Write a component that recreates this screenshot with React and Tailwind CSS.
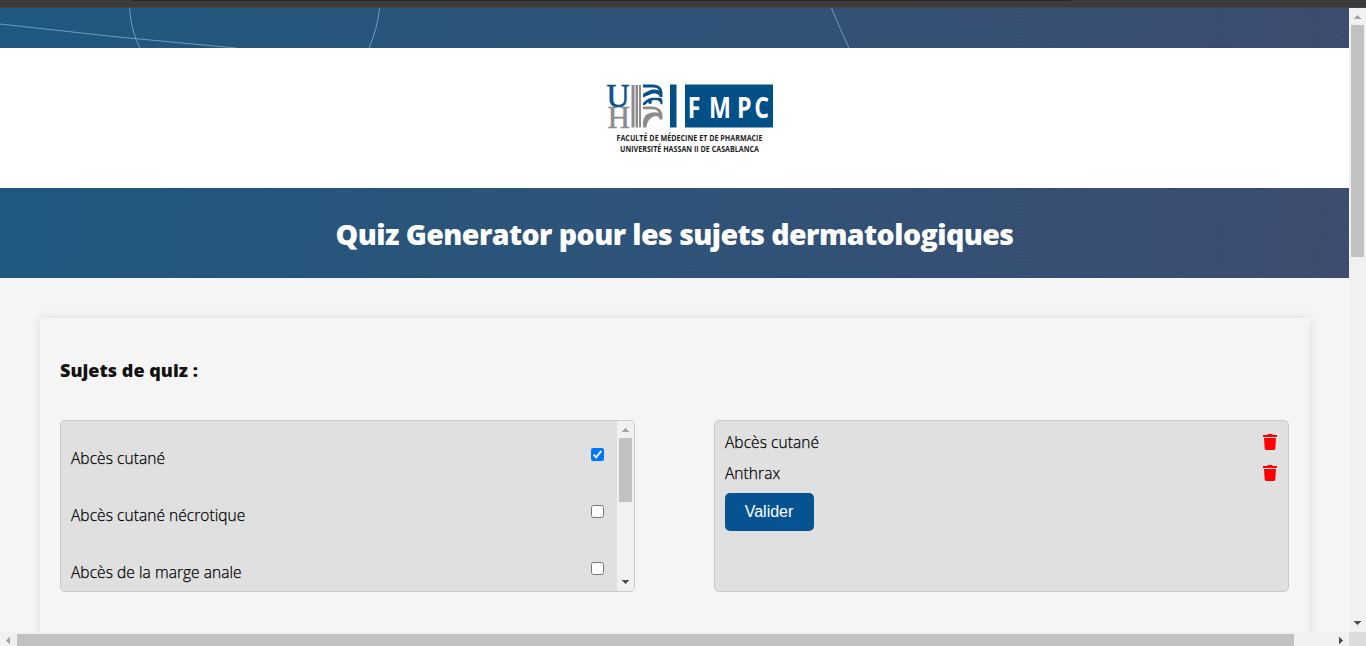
import React from "react";

const topics = [
  { name: "Abcès cutané", checked: true },
  { name: "Abcès cutané nécrotique", checked: false },
  { name: "Abcès de la marge anale", checked: false },
];
const selected = ["Abcès cutané", "Anthrax"];

function Arrow({ d, className }) {
  return (
    <svg className={className} width="7" height="7" viewBox="0 0 7 7" shapeRendering="crispEdges">
      <path d={d} fill="currentColor" />
    </svg>
  );
}
const UP = "M3 2h1v1h1v1h1v1h1v1H0V5h1V4h1V3h1z";
const DOWN = "M0 1h7v1H6v1H5v1H4v1H3V4H2V3H1V2H0z";
const LEFT = "M1 3h1V2h1V1h1V0h1v7H4V6H3V5H2V4H1z";
const RIGHT = "M2 0h1v1h1v1h1v1h1v1H5v1H4v1H3v1H2z";

function Trash() {
  return (
    <svg className="block text-[#ff0000]" width="14" height="16" viewBox="0 0 14 16">
      <path fill="currentColor" d="M0 1h4.2L4.6 .3Q4.8 0 5.2 0h3.6q.4 0 .6.3L9.800 1H14v2H0zM1 4h12l-.7 10.600Q12.200 16 10.800 16H3.200Q1.800 16 1.700 14.600z" />
    </svg>
  );
}

function Check({ on }) {
  return on ? (
    <svg className="block" width="13" height="13" viewBox="0 0 13 13">
      <rect width="13" height="13" rx="2" fill="#0075ff" />
      <path d="M2.700 6.800l2.500 2.500 5-6.300" fill="none" stroke="#fff" strokeWidth="2" />
    </svg>
  ) : (
    <span className="block h-[13px] w-[13px] rounded-[2.5px] border border-[#767676] bg-white" />
  );
}

function Band({ className, children }) {
  return (
    <div className={"relative overflow-hidden bg-linear-[97deg] from-[#20587f] via-[#2f5378] to-[#3d4c6f] " + className}>
      {children}
    </div>
  );
}

function Waves({ h }) {
  return (
    <svg className="absolute inset-0" width="1349" height={h} viewBox={"0 0 1349 " + h} fill="none" stroke="#1c3f68" strokeOpacity=".12">
      {[-60, -48, -36, -24, -12, 0, 12, 24, 36, 48, 60, 72, 84].map((y) => (
        <path key={y} d={`M0 ${y}C150 ${y - 20} 300 ${y + 30} 500 ${y + 32}S800 ${y + 35} 960 ${y + 8}S1200 ${y + 50} 1349 ${y - 10}`} />
      ))}
    </svg>
  );
}

function Logo() {
  return (
    <svg width="200" height="100" viewBox="590 70 200 100" className="block">
      <g fontFamily="'Liberation Serif', serif">
        <text x="607.500" y="127.500" textLength="22.500" lengthAdjust="spacingAndGlyphs" fontSize="31" fill="#8d8b8e" stroke="#8d8b8e" strokeWidth=".5">H</text>
        <text x="606.500" y="107" textLength="23" lengthAdjust="spacingAndGlyphs" fontSize="34" fill="#0b5189" stroke="#0b5189" strokeWidth=".7">U</text>
      </g>
      <path d="M631.500 85h3v42.500h-3zM635.500 85h2.500v42.500h-2.500zM639 85h2v42.500h-2z" fill="#8d8b8e" />
      <path d="M643 84.500h10.500q8.500.5 9 8V97h-2.800q-.5-3-4.200-3.500-3-.3-6 1.300L643 97.500V94q5.500-4 10-4.500 3.500-.2 6 1-1-2.800-6-3H643z" fill="#0b5189" />
      <path d="M643 103q4-4.500 9-5.200h7.500q3 0 3 3.500v3h-1.800q-.5-3.500-3.700-4-3-.5-5 .2-4 .7-7 4.500h-2z" fill="#0b5189" />
      <circle cx="650" cy="102" r="1.900" fill="#0b5189" />
      <path d="M643 106.500h10q9 1 9.500 9v4h-2.800q-.5-3.500-4.200-3.500-3.500.5-5.500 3-3 2.500-3.500 8.500H643v-5q.5-6.500 4.500-8.500 5-3 11.200-1.200-1.200-3.300-6.200-3.500H643z" fill="#8d8b8e" />
      <path d="M670 84.500h6.500v43H670zM685 84.500h88v43h-88z" fill="#004f86" />
      <text x="0 26.500 61.500 83" y="118" transform="translate(687.800 0) scale(.8 1)" fontFamily="'Open Sans', sans-serif" fontSize="29" fontWeight="700" fill="#fff">FMPC</text>
      <g fontFamily="'Open Sans', sans-serif" fontSize="8.500" fontWeight="700" fill="#242424">
        <text x="616.500" y="140.500" textLength="146" lengthAdjust="spacingAndGlyphs">FACULTÉ DE MÉDECINE ET DE PHARMACIE</text>
        <text x="620" y="151.500" textLength="139" lengthAdjust="spacingAndGlyphs">UNIVERSITÉ HASSAN II DE CASABLANCA</text>
      </g>
    </svg>
  );
}

export default function App() {
  return (
    <div className="flex h-[646px] w-[1366px] flex-col overflow-hidden bg-[#f5f5f5] font-['Open_Sans',sans-serif] text-[#111]">
      <div className="flex h-2 shrink-0 justify-start border-b border-[#4a4540] bg-[#3b3b3b] pl-[133px]">
        <div className="h-px w-[938px] bg-[#252525]" />
      </div>
      <div className="flex h-[624px]">
        <main className="flex w-[1349px] flex-col overflow-hidden">
          <Band className="h-10 shrink-0">
            <Waves h={40} />
            <svg className="relative block" width="1349" height="40" fill="none" stroke="#75a9d0" strokeWidth="1">
              <path d="M0 16Q118 30 236 40M129.500 0Q131 23 140 40M379.500 0Q378 19 369 40M831.500 0Q840 21 849 40" strokeOpacity=".85" />
            </svg>
          </Band>
          <div className="flex h-[140px] shrink-0 justify-center bg-white pt-[22px] pl-[31px]">
            <Logo />
          </div>
          <Band className="h-[90px] shrink-0">
            <Waves h={90} />
            <h1 className="relative pt-[24px] text-center text-[28.500px] leading-[44px] font-extrabold tracking-[-0.55px] whitespace-nowrap text-white">
              Quiz Generator pour les sujets dermatologiques
            </h1>
          </Band>
          <section className="mx-10 mt-10 h-[400px] shrink-0 px-5 pt-10 shadow-[0_0_10px_rgba(0,0,0,0.1)]">
            <h2 className="h-[62px] text-[18px] leading-6 font-extrabold tracking-[0.02px]">Sujets de quiz :</h2>
            <div className="flex justify-between">
              <div className="flex h-[172px] w-[575px] overflow-hidden rounded-[5px] border border-[#c9c9c9] bg-[#e0e0e0]">
                <div className="flex-1 pt-[9px] pr-[13px] pl-2.5">
                  {topics.map((t) => (
                    <div key={t.name} className="flex h-[57px] justify-between">
                      <span className="pt-4 text-[15.500px] leading-6 font-light tracking-[0.06px] text-black [-webkit-text-stroke:0.25px_#000]">{t.name}</span>
                      <span className="pt-[18px]"><Check on={t.checked} /></span>
                    </div>
                  ))}
                </div>
                <div className="flex w-[17px] flex-col items-center bg-[#f1f1f1]">
                  <div className="flex h-[17px] items-center"><Arrow d={UP} className="text-[#a3a3a3]" /></div>
                  <div className="h-16 w-[13px] bg-[#c1c1c1]" />
                  <div className="mt-auto flex h-[17px] items-center"><Arrow d={DOWN} className="text-[#505050]" /></div>
                </div>
              </div>
              <div className="h-[172px] w-[575px] rounded-[5px] border border-[#c9c9c9] bg-[#e0e0e0] px-2.5 pt-[5px]">
                {selected.map((s) => (
                  <div key={s} className="flex h-[31px] items-center justify-between pr-px">
                    <span className="text-[15.500px] leading-6 font-light tracking-[0.06px] text-black [-webkit-text-stroke:0.25px_#000]">{s}</span>
                    <Trash />
                  </div>
                ))}
                <button className="mt-[5px] block h-[38px] w-[89px] rounded-[5px] bg-[#075391] pr-px font-['Liberation_Sans',sans-serif] text-base leading-5 text-white">
                  Valider
                </button>
              </div>
            </div>
          </section>
        </main>
        <div className="flex w-[17px] flex-col items-center bg-[#f1f1f1]">
          <div className="flex h-[17px] items-center"><Arrow d={UP} className="text-[#a3a3a3]" /></div>
          <div className="h-[232px] w-[13px] bg-[#c1c1c1]" />
          <div className="mt-auto flex h-[17px] items-center"><Arrow d={DOWN} className="text-[#505050]" /></div>
        </div>
      </div>
      <div className="flex h-[14px] shrink-0">
        <div className="flex w-[1349px] items-end bg-[#f1f1f1]">
          <div className="flex h-3 w-[17px] items-center justify-center"><Arrow d={LEFT} className="text-[#a3a3a3]" /></div>
          <div className="h-3 w-[1277px] bg-[#c1c1c1]" />
          <div className="ml-auto flex h-3 w-[17px] items-center justify-center"><Arrow d={RIGHT} className="text-[#505050]" /></div>
        </div>
        <div className="w-[17px] bg-[#dcdcdc]" />
      </div>
    </div>
  );
}
